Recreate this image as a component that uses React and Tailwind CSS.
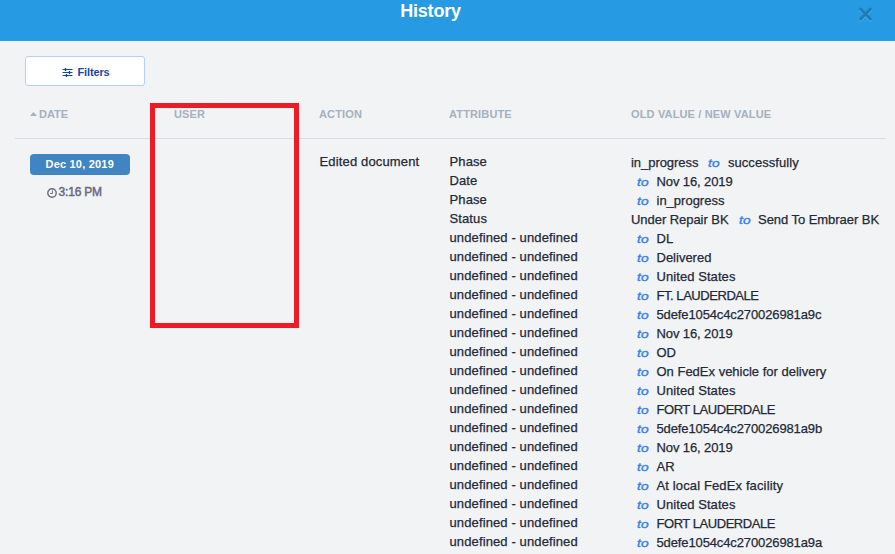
import React from "react";

const HASH = "tracking-[-0.12px]";
const DATE = "tracking-[-0.1px]";
const CAPS = "tracking-[-0.45px]";
const LOOSE = "tracking-[0.07px]";
const EVEN = "tracking-normal";

const changes = [
  ["Phase", "in_progress", "successfully", LOOSE],
  ["Date", "", "Nov 16, 2019", DATE],
  ["Phase", "", "in_progress", EVEN],
  ["Status", "Under Repair BK", "Send To Embraer BK", "tracking-[-0.05px]"],
  ["undefined - undefined", "", "DL", EVEN],
  ["undefined - undefined", "", "Delivered", EVEN],
  ["undefined - undefined", "", "United States", LOOSE],
  ["undefined - undefined", "", "FT. LAUDERDALE", CAPS],
  ["undefined - undefined", "", "5defe1054c4c270026981a9c", HASH],
  ["undefined - undefined", "", "Nov 16, 2019", DATE],
  ["undefined - undefined", "", "OD", EVEN],
  ["undefined - undefined", "", "On FedEx vehicle for delivery", EVEN],
  ["undefined - undefined", "", "United States", LOOSE],
  ["undefined - undefined", "", "FORT LAUDERDALE", CAPS],
  ["undefined - undefined", "", "5defe1054c4c270026981a9b", HASH],
  ["undefined - undefined", "", "Nov 16, 2019", DATE],
  ["undefined - undefined", "", "AR", EVEN],
  ["undefined - undefined", "", "At local FedEx facility", "tracking-[0.13px]"],
  ["undefined - undefined", "", "United States", LOOSE],
  ["undefined - undefined", "", "FORT LAUDERDALE", CAPS],
  ["undefined - undefined", "", "5defe1054c4c270026981a9a", HASH],
];

function SlidersIcon() {
  return (
    <svg width="11" height="11" viewBox="0 0 11 11" fill="none" stroke="#1448a0">
      <path d="M0.5 2.5H10.5M0.5 5.5H10.5M0.5 8.5H10.5" strokeWidth="1" />
      <path d="M3.5 1V4M7.5 4V7M4.5 7V10" strokeWidth="1.4" />
    </svg>
  );
}

function ClockIcon() {
  return (
    <svg width="10" height="10" viewBox="0 0 10 10" fill="none" stroke="#69697f">
      <circle cx="5" cy="5" r="4.2" strokeWidth="1.4" />
      <path d="M5.4 2.5V5.5H3.2" strokeWidth="1" />
    </svg>
  );
}

function Header() {
  return (
    <header className="grid h-[41px] grid-cols-[1fr_auto_1fr] items-start bg-[#279ae4]">
      <span />
      <h1 className="mr-[34px] text-[18px] leading-[22px] font-bold tracking-[-0.2px] text-white">History</h1>
      <button className="mt-[7px] mr-[22px] justify-self-end" aria-label="Close">
        <svg width="15" height="15" viewBox="0 0 15 15" fill="none" strokeWidth="2.8">
          <path d="M1.7 2.3L13.3 13.9M13.3 2.3L1.7 13.9" stroke="#55b0ea" />
          <path d="M1.7 1.3L13.3 12.9M13.3 1.3L1.7 12.9" stroke="#1f7bb6" />
        </svg>
      </button>
    </header>
  );
}

export default function App() {
  return (
    <div className="relative h-[554px] w-[895px] overflow-hidden bg-[#f1f3f5] font-['Liberation_Sans',Arial,sans-serif] text-[13px] text-[#1f2937]">
      <Header />
      <div className="px-[25px] pt-[15px]">
        <button className="flex h-[30px] w-[120px] items-center justify-center gap-[5px] rounded-[3px] border border-[#b3cffb] bg-white pt-[3px] pl-px text-[11px] font-bold tracking-[-0.15px] text-[#1448a0]">
          <SlidersIcon />
          Filters
        </button>
      </div>
      <main className="ml-[15px] mr-[9px]">
        <div className="grid h-[53px] grid-cols-[144.5px_145px_130px_182px_1fr] items-start border-b border-[#dadce0] pt-[20px] pl-[14.5px] text-[11px] leading-[16px] font-bold tracking-[0.15px] text-[#a5b0c0]">
          <div className="flex items-center gap-[2.5px] tracking-normal">
            <svg width="7" height="4" viewBox="0 0 7 4" fill="#a5b0c0"><path d="M0 4L3.5 0L7 4Z" /></svg>
            DATE
          </div>
          <div>USER</div>
          <div>ACTION</div>
          <div>ATTRIBUTE</div>
          <div>OLD VALUE / NEW VALUE</div>
        </div>
        <div className="grid grid-cols-[144.5px_145px_130px_182px_1fr] pt-[13px] pl-[14.5px] leading-[19px] whitespace-nowrap [-webkit-text-stroke:0.25px_currentColor]">
          <div className="flex w-[101px] flex-col items-center pt-[2px] pl-[0.5px]">
            <span className="flex h-[21px] w-[100px] items-center justify-center rounded-[4px] bg-[#4085c1] pr-px text-[11px] font-bold tracking-[0.2px] text-white [-webkit-text-stroke:0px]">Dec 10, 2019</span>
            <span className="mt-[8px] flex items-center gap-[2px] pr-[12px] text-[12px] tracking-[-0.2px] text-[#69697f] [-webkit-text-stroke:0.45px_currentColor]">
              <ClockIcon />
              3:16 PM
            </span>
          </div>
          <div />
          <div className="pl-[0.5px] tracking-[0.15px]">Edited document</div>
          <div className="pl-[0.5px] tracking-[0.12px]">
            {changes.map(([attr], i) => <div key={i}>{attr}</div>)}
          </div>
          <div className="pt-px">
            {changes.map(([, before, after, tracking], i) => (
              <div key={i} className="flex h-[19px]">
                {before && <span className="mr-[4px] tracking-[-0.05px]">{before}</span>}
                <em className="mt-px ml-[6px] w-[19.5px] text-[11px] text-[#3b7ff0] [-webkit-text-stroke:0.4px_currentColor]">
                  <span className="inline-block origin-left scale-x-[1.25] tracking-[0.2px]">to</span>
                </em>
                <span className={tracking}>{after}</span>
              </div>
            ))}
          </div>
        </div>
      </main>
      <div className="absolute top-[103px] left-[150px] h-[225px] w-[149px] border-5 border-[#ed1c24]" />
    </div>
  );
}
